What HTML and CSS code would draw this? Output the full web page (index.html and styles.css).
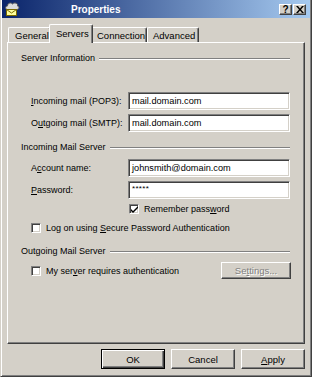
FILE: index.html
```html
<!DOCTYPE html>
<html>
<head>
<meta charset="utf-8">
<link rel="stylesheet" href="styles.css">
</head>
<body>
<div class="window">
  <div class="titlebar">
    <svg class="app-icon" width="16" height="16" viewBox="0 0 16 16">
      <path d="M3.5 8.5 C1 8.5 1 5 3.5 5 C3.5 2 7 1 8.5 3 C10 1 14.5 2 13.5 5 C15.5 5 15.5 8.5 13 8.5 Z" fill="#dcdcdc" stroke="#5a5a5a"/>
      <rect x="2.5" y="8.5" width="10" height="6" fill="#ffff9c" stroke="#7a6a00"/>
      <path d="M2.5 8.5 L7.5 12 L12.5 8.5" fill="none" stroke="#7a6a00"/>
    </svg>
    <span class="title">Properties</span>
    <div class="caption-btns">
      <div class="cap-btn">?</div>
      <div class="cap-btn close">
        <svg width="8" height="7" viewBox="0 0 8 7"><path d="M0 0h2l2 2.5 2-2.5h2L5 3.5 8 7H6L4 4.5 2 7H0l3-3.5z" fill="#000"/></svg>
      </div>
    </div>
  </div>
  <div class="body">
    <div class="tabs">
      <div class="tab first">General</div>
      <div class="tab active">Servers</div>
      <div class="tab conn">Connection</div>
      <div class="tab adv">Advanced</div>
    </div>
    <div class="panel">
      <div class="group-title g1"><span>Server Information</span><i class="rule"></i></div>
      <div class="field-row r-in">
        <span class="lbl"><u>I</u>ncoming mail (POP3):</span>
        <div class="input">mail.domain.com</div>
      </div>
      <div class="field-row r-out">
        <span class="lbl">O<u>u</u>tgoing mail (SMTP):</span>
        <div class="input">mail.domain.com</div>
      </div>
      <div class="group-title g2"><span>Incoming Mail Server</span><i class="rule"></i></div>
      <div class="field-row r-acc">
        <span class="lbl">A<u>c</u>count name:</span>
        <div class="input">johnsmith@domain.com</div>
      </div>
      <div class="field-row r-pw">
        <span class="lbl"><u>P</u>assword:</span>
        <div class="input pw">*****</div>
      </div>
      <div class="check-row r-rem">
        <span class="check on"><svg width="7" height="7" viewBox="0 0 7 7"><path d="M0 3l2 2 5-5v2L2 7 0 5z" fill="#000"/></svg></span>
        <span>Remember pass<u>w</u>ord</span>
      </div>
      <div class="check-row r-spa">
        <span class="check"></span>
        <span>Log on using <u>S</u>ecure Password Authentication</span>
      </div>
      <div class="group-title g3"><span>Outgoing Mail Server</span><i class="rule"></i></div>
      <div class="check-row r-auth">
        <span class="check"></span>
        <span class="grow">My ser<u>v</u>er requires authentication</span>
        <div class="btn disabled settings">Se<u>t</u>tings...</div>
      </div>
    </div>
    <div class="buttons">
      <div class="btn default">OK</div>
      <div class="btn">Cancel</div>
      <div class="btn"><u>A</u>pply</div>
    </div>
  </div>
</div>
</body>
</html>
```

FILE: styles.css
```css
* { box-sizing: border-box; }
html, body { margin: 0; padding: 0; background: #d4d0c8; }
body {
  font-family: "Liberation Sans", Arial, sans-serif;
  font-size: 9px;
  color: #000;
}
u { text-decoration: underline; text-underline-offset: 1px; }

.window {
  width: 312px;
  height: 377px;
  background: #d4d0c8;
  border-left: 1px solid #d4d0c8;
  border-right: 1px solid #404040;
  border-bottom: 1px solid #404040;
  box-shadow: inset 1px 0 #fff, inset -1px -1px #808080;
  padding: 0 1px 1px 1px;
  display: flex;
  flex-direction: column;
}

.titlebar {
  height: 18px;
  flex: none;
  background: linear-gradient(to right, #0a246a, #a6caf0);
  display: flex;
  align-items: center;
  padding: 0 2px 0 2px;
}
.app-icon { flex: none; margin-left: 0; margin-top: -1px; }
.title {
  color: #fff;
  font-weight: bold;
  font-size: 10px;
  margin-left: 51px;
  flex: 1;
}
.caption-btns { display: flex; gap: 1px; margin-right: 2px; }
.cap-btn {
  width: 13px;
  height: 11px;
  background: #d4d0c8;
  border-top: 1px solid #fff;
  border-left: 1px solid #fff;
  border-right: 1px solid #404040;
  border-bottom: 1px solid #404040;
  box-shadow: inset -1px -1px #808080;
  font-weight: bold;
  font-size: 10px;
  line-height: 9px;
  text-align: center;
  display: flex;
  align-items: center;
  justify-content: center;
}

.body {
  flex: 1;
  display: flex;
  flex-direction: column;
  padding: 6px 5px 0 5px;
}

.tabs {
  height: 18px;
  display: flex;
  align-items: flex-end;
  padding-left: 1px;
  position: relative;
  z-index: 1;
}
.tab {
  height: 15px;
  padding: 0 5px;
  border-top: 1px solid #fff;
  border-left: 1px solid #fff;
  border-right: 1px solid #404040;
  box-shadow: inset -1px 0 #808080;
  border-radius: 2px 2px 0 0;
  display: flex;
  align-items: center;
  padding-top: 1px;
  background: #d4d0c8;
  white-space: nowrap;
  font-size: 9.5px;
}
.tab.first { width: 43px; padding-left: 6px; }
.tab.active {
  height: 19px;
  width: 44px;
  margin: 0 -2px -1px -2px;
  padding-left: 6px;
  padding-bottom: 3px;
  position: relative;
  z-index: 2;
}
.tab.conn { width: 56px; padding-left: 5px; }
.tab.adv { width: 52px; padding-left: 5px; }

.panel {
  height: 302px;
  flex: none;
  border-top: 1px solid #fff;
  border-left: 1px solid #fff;
  border-right: 1px solid #404040;
  border-bottom: 1px solid #404040;
  box-shadow: inset -1px -1px #808080;
  padding: 0 14px 0 13px;
  display: flex;
  flex-direction: column;
}

.group-title {
  height: 12px;
  display: flex;
  align-items: center;
  white-space: nowrap;
}
.group-title .rule {
  flex: 1;
  height: 2px;
  border-top: 1px solid #808080;
  border-bottom: 1px solid #fff;
  margin-left: 4px;
  margin-top: 2px;
}
.g1 { margin-top: 9px; }
.g2 { margin-top: 9px; }
.g3 { margin-top: 11px; }

.field-row {
  display: flex;
  align-items: center;
  height: 18px;
  padding-left: 10px;
  white-space: nowrap;
}
.field-row .lbl { width: 97px; flex: none; }
.r-in { margin-top: 28px; }
.r-out { margin-top: 4px; }
.r-acc { margin-top: 6px; }
.r-pw { margin-top: 4px; }

.input {
  width: 163px;
  height: 18px;
  background: #fff;
  border-top: 1px solid #808080;
  border-left: 1px solid #808080;
  border-right: 1px solid #fff;
  border-bottom: 1px solid #fff;
  box-shadow: inset 1px 1px #404040, inset -1px -1px #d4d0c8;
  padding-left: 3px;
  display: flex;
  align-items: center;
  font-size: 9.2px;
}
.input.pw { align-items: flex-start; padding-top: 2px; font-size: 8px; letter-spacing: 0.3px; }

.check-row {
  display: flex;
  align-items: center;
  padding-left: 10px;
  height: 12px;
  white-space: nowrap;
}
.check {
  width: 10px;
  height: 10px;
  flex: none;
  background: #fff;
  border-top: 1px solid #808080;
  border-left: 1px solid #808080;
  border-right: 1px solid #fff;
  border-bottom: 1px solid #fff;
  box-shadow: inset 1px 1px #404040, inset -1px -1px #d4d0c8;
  margin-right: 5px;
  display: flex;
  align-items: center;
  justify-content: center;
}
.r-rem { margin-top: 4px; padding-left: 108px; }
.r-spa { margin-top: 7px; }
.r-auth { margin-top: 5px; height: 17px; }
.grow { flex: 1; }

.btn {
  width: 64px;
  height: 20px;
  background: #d4d0c8;
  border-top: 1px solid #fff;
  border-left: 1px solid #fff;
  border-right: 1px solid #404040;
  border-bottom: 1px solid #404040;
  box-shadow: inset -1px -1px #808080;
  display: flex;
  align-items: center;
  justify-content: center;
  font-size: 9.5px;
}
.btn.default {
  border: 1px solid #000;
  box-shadow: inset 1px 1px #fff, inset -1px -1px #404040, inset -2px -2px #808080;
}
.btn.disabled {
  color: #808080;
  text-shadow: 1px 1px #fff;
}
.settings { width: 70px; height: 17px; margin-right: -1px; }

.buttons {
  display: flex;
  justify-content: flex-end;
  gap: 6px;
  margin-top: 5px;
}
```
